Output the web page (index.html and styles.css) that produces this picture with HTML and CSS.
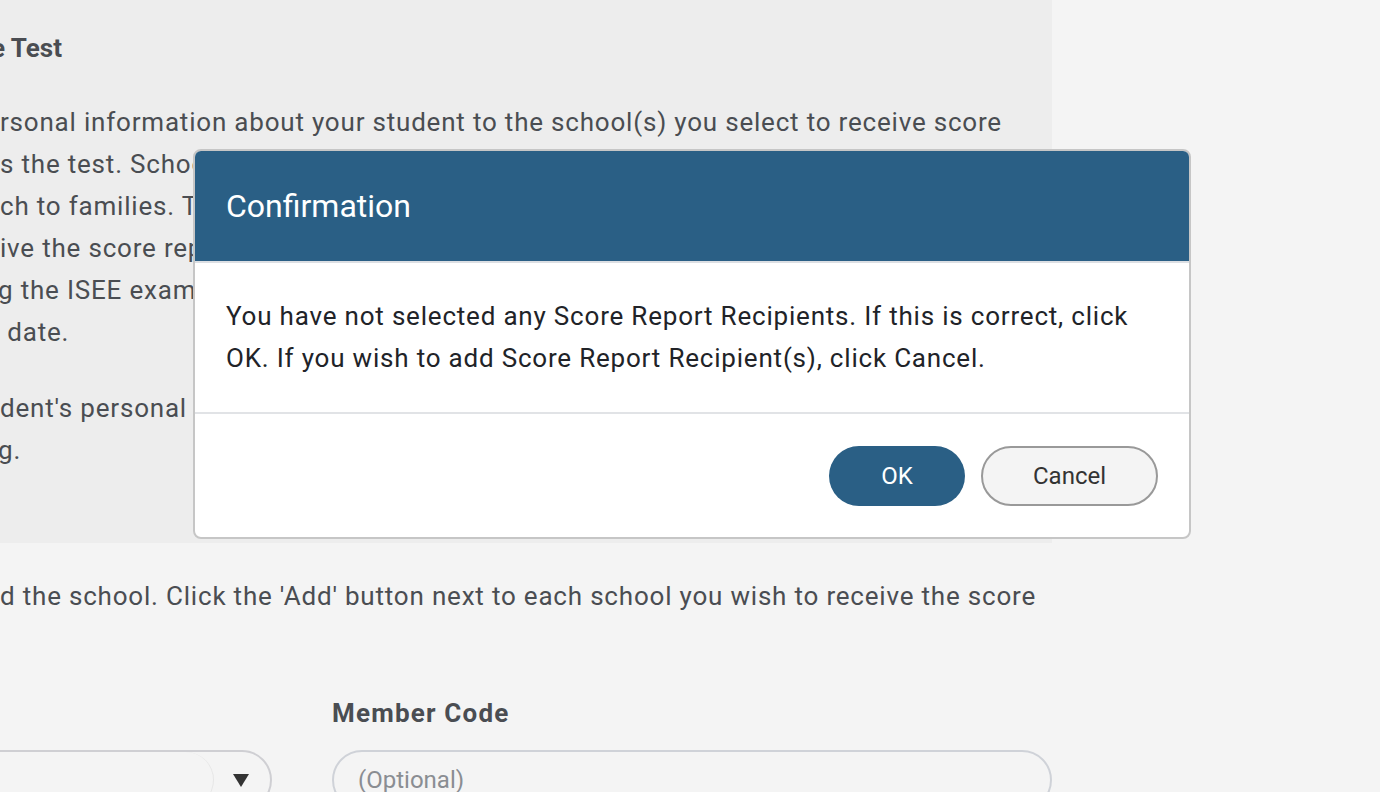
FILE: index.html
```html
<!DOCTYPE html>
<html lang="en">
<head>
    <meta charset="UTF-8">
    <meta name="viewport" content="width=device-width, initial-scale=1.0">
    <title>Score Report Recipients</title>
    <link rel="stylesheet" href="styles.css">
</head>
<body>

    <div class="info-panel">
        <h3>e Test</h3>
        <p>rsonal information about your student to the school(s) you select to receive score<br>
        s the test. Schools use this information to make decisions and to<br>
        ch to families. The school(s) you select will<br>
        ive the score report for each<br>
        <span class="cut">g</span> the ISEE exam: within two weeks<br>
        &nbsp;date.</p>
        <p>dent's personal information<br>
        <span class="cut">g</span>.</p>
    </div>

    <div class="recipients">
        <p class="hint">d the school. Click the 'Add' button next to each school you wish to receive the score</p>

        <div class="fields">
            <div class="field field-school">
                <label>&nbsp;</label>
                <div class="select-box">
                    <div class="select-inner"></div>
                    <span class="caret"></span>
                </div>
            </div>
            <div class="field field-code">
                <label>Member Code</label>
                <input type="text" placeholder="(Optional)">
            </div>
        </div>
    </div>

    <!-- Confirmation dialog -->
    <div class="modal">
        <div class="modal-header">
            <h2>Confirmation</h2>
        </div>
        <div class="modal-body">
            <p>You have not selected any Score Report Recipients. If this is correct, click OK. If you wish to add Score Report Recipient(s), click Cancel.</p>
        </div>
        <div class="modal-footer">
            <button class="btn-ok">OK</button>
            <button class="btn-cancel">Cancel</button>
        </div>
    </div>

</body>
</html>
```

FILE: styles.css
```css
body {
    font-family: Roboto, "Noto Sans", Arial, sans-serif;
    background-color: #f4f4f4;
    color: #4a4d52;
    margin: 0;
    padding: 0;
    overflow: hidden;
}
.info-panel {
    background-color: #ededed;
    width: 1052px;
    height: 543px;
    box-sizing: border-box;
    padding-top: 27px;
    overflow: hidden;
    white-space: nowrap;
}
.info-panel h3 {
    font-size: 26px;
    line-height: 42px;
    text-indent: -9px;
    margin: 0 0 32px 0;
}
.info-panel p {
    font-size: 26px;
    line-height: 42px;
    letter-spacing: 0.8px;
    margin: 0 0 34px 0;
}
.cut {
    margin-left: -2px;
}
.recipients {
    width: 1052px;
    overflow: hidden;
    white-space: nowrap;
}
.hint {
    font-size: 26px;
    line-height: 42px;
    letter-spacing: 0.8px;
    margin: 32px 0 0 0;
}
.fields {
    display: flex;
    gap: 60px;
    margin-top: 80px;
}
.field label {
    display: block;
    font-size: 26px;
    font-weight: bold;
    line-height: 32px;
    letter-spacing: 1.2px;
    margin-bottom: 21px;
}
.field-school {
    width: 272px;
}
.select-box {
    display: flex;
    align-items: center;
    height: 60px;
    margin-left: -40px;
    border: 2px solid #cfcfd3;
    border-radius: 30px;
    box-sizing: border-box;
}
.select-inner {
    flex: 1;
    height: 100%;
    border-right: 1px solid #e6e6e6;
    border-radius: 0 28px 28px 0;
}
.caret {
    width: 56px;
    display: flex;
    justify-content: center;
}
.caret::before {
    content: "";
    border-left: 8px solid transparent;
    border-right: 8px solid transparent;
    border-top: 13px solid #333;
    margin-right: 2px;
}
.field-code {
    width: 720px;
}
.field-code input {
    width: 100%;
    height: 60px;
    box-sizing: border-box;
    border: 2px solid #cfd2d8;
    border-radius: 30px;
    background-color: #f4f4f4;
    padding: 0 24px;
    font-family: Roboto, Arial, sans-serif;
    font-size: 24px;
}
.field-code input::placeholder {
    color: #8a8d92;
}

/* Modal */
.modal {
    position: absolute;
    left: 193px;
    top: 149px;
    width: 998px;
    height: 390px;
    box-sizing: border-box;
    background-color: #fff;
    border: 2px solid #c6c6c6;
    border-radius: 8px;
    overflow: hidden;
    display: flex;
    flex-direction: column;
}
.modal-header {
    background-color: #2a5f85;
    height: 112px;
    border-bottom: 2px solid #dcdfe3;
    box-sizing: border-box;
    padding: 0 31px;
    display: flex;
    align-items: center;
}
.modal-header h2 {
    color: #fff;
    font-size: 32px;
    font-weight: normal;
    margin: 0;
}
.modal-body {
    padding: 32px 31px 33px 31px;
    border-bottom: 2px solid #e1e3e6;
}
.modal-body p {
    margin: 0;
    font-size: 26px;
    line-height: 42px;
    letter-spacing: 0.8px;
    color: #212328;
}
.modal-footer {
    flex: 1;
    display: flex;
    justify-content: flex-end;
    align-items: center;
    gap: 16px;
    padding: 0 31px 0 0;
}
.modal-footer button {
    font-family: Roboto, Arial, sans-serif;
    font-size: 24px;
    height: 60px;
    border-radius: 30px;
    cursor: pointer;
}
.btn-ok {
    width: 136px;
    background-color: #2a5f85;
    color: #fff;
    border: none;
}
.btn-cancel {
    width: 177px;
    background-color: #f4f4f4;
    color: #333;
    border: 2px solid #999;
}
```
